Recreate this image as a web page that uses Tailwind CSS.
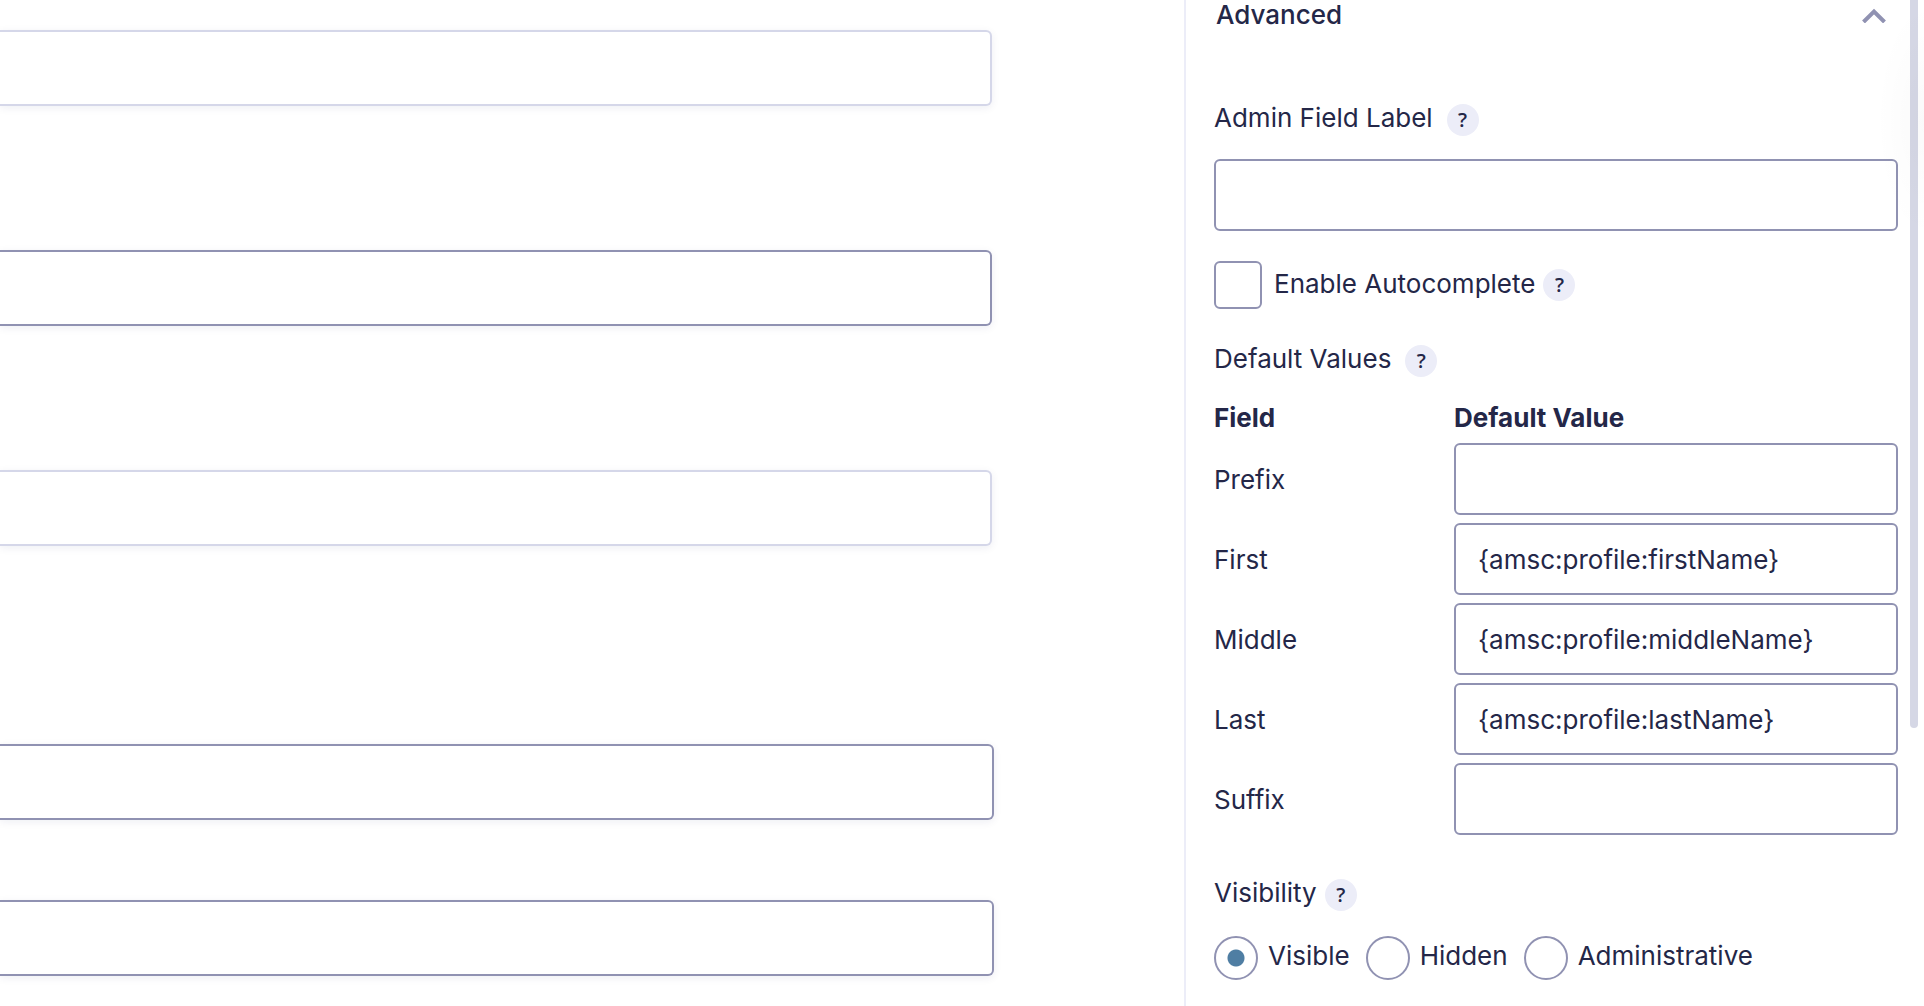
<!DOCTYPE html>
<html lang="en">
<head>
    <meta charset="UTF-8">
    <meta name="viewport" content="width=device-width, initial-scale=1.0">
    <title>Form Editor</title>
    <script src="https://cdn.jsdelivr.net/npm/@tailwindcss/browser@4"></script>
</head>
<body class="flex min-h-screen overflow-hidden bg-white font-['Inter',sans-serif] text-[26px] leading-8 text-[#242748]">
    <!-- Form canvas -->
    <main class="flex flex-1 flex-col pt-[30px] pr-[190px]">
        <div class="flex flex-col gap-36 pr-0.5">
            <input type="text" aria-label="Field 1" class="h-[76px] w-full rounded-r-md border-2 border-l-0 border-[#d5d7e9] bg-white px-6 shadow-[0_2px_8px_rgba(18,25,97,0.07)]">
            <input type="text" aria-label="Field 2" class="h-[76px] w-full rounded-r-md border-2 border-l-0 border-[#9092b2] bg-white px-6 shadow-[0_2px_8px_rgba(18,25,97,0.07)]">
            <input type="text" aria-label="Field 3" class="h-[76px] w-full rounded-r-md border-2 border-l-0 border-[#d5d7e9] bg-white px-6 shadow-[0_2px_8px_rgba(18,25,97,0.07)]">
        </div>
        <div class="mt-[198px] flex flex-col gap-20">
            <input type="text" aria-label="Field 4" class="h-[76px] w-full rounded-r-md border-2 border-l-0 border-[#9092b2] bg-white px-6 shadow-[0_2px_8px_rgba(18,25,97,0.07)]">
            <input type="text" aria-label="Field 5" class="h-[76px] w-full rounded-r-md border-2 border-l-0 border-[#9092b2] bg-white px-6 shadow-[0_2px_8px_rgba(18,25,97,0.07)]">
        </div>
    </main>

    <!-- Field settings sidebar -->
    <aside class="relative w-[740px] shrink-0 border-l-2 border-[#ecedf8] pr-[26px] pl-7">
        <button type="button" aria-expanded="true" class="flex w-full items-center justify-between pr-3 pl-0.5 text-left leading-[30px] font-medium">
            Advanced
            <svg class="h-4 w-6" viewBox="0 0 24 16" fill="none" stroke="#9092b2" stroke-width="4" aria-hidden="true">
                <path d="M1.5 15 12 4.5 22.5 15"/>
            </svg>
        </button>

        <div class="mt-[72px] flex items-center gap-3.5">
            <label for="admin-label" class="pb-1">Admin Field Label</label>
            <button type="button" aria-label="Help: Admin Field Label" class="size-8 rounded-full bg-[#ecedf8] font-['Open_Sans',sans-serif] text-xl font-semibold">?</button>
        </div>
        <input id="admin-label" type="text" class="mt-[21px] block h-[72px] w-full rounded-md border-2 border-[#9092b2] bg-white px-[22px]">

        <div class="mt-[30px] flex items-center">
            <input id="autocomplete" type="checkbox" class="size-12 appearance-none rounded-md border-2 border-[#9092b2] bg-white checked:bg-[#4f7ea3]">
            <label for="autocomplete" class="pr-2 pb-0.5 pl-3">Enable Autocomplete</label>
            <button type="button" aria-label="Help: Enable Autocomplete" class="size-8 rounded-full bg-[#ecedf8] font-['Open_Sans',sans-serif] text-xl font-semibold">?</button>
        </div>

        <div class="mt-[34px] flex items-center gap-3.5">
            <span id="defaults-title" class="pb-1">Default Values</span>
            <button type="button" aria-label="Help: Default Values" class="size-8 rounded-full bg-[#ecedf8] font-['Open_Sans',sans-serif] text-xl font-semibold">?</button>
        </div>
        <table aria-labelledby="defaults-title" class="mt-[22px] w-full table-fixed">
            <thead>
                <tr class="h-[42px] text-left align-top">
                    <th class="w-60 pt-px font-bold">Field</th>
                    <th class="pt-px font-bold">Default Value</th>
                </tr>
            </thead>
            <tbody>
                <tr>
                    <td class="pb-1.5"><label for="prefix">Prefix</label></td>
                    <td class="pb-2"><input id="prefix" type="text" class="block h-[72px] w-full rounded-md border-2 border-[#9092b2] bg-white px-[22px]"></td>
                </tr>
                <tr>
                    <td class="pb-1.5"><label for="first">First</label></td>
                    <td class="pb-2"><input id="first" type="text" value="{amsc:profile:firstName}" class="block h-[72px] w-full rounded-md border-2 border-[#9092b2] bg-white px-[22px]"></td>
                </tr>
                <tr>
                    <td class="pb-1.5"><label for="middle">Middle</label></td>
                    <td class="pb-2"><input id="middle" type="text" value="{amsc:profile:middleName}" class="block h-[72px] w-full rounded-md border-2 border-[#9092b2] bg-white px-[22px]"></td>
                </tr>
                <tr>
                    <td class="pb-1.5"><label for="last">Last</label></td>
                    <td class="pb-2"><input id="last" type="text" value="{amsc:profile:lastName}" class="block h-[72px] w-full rounded-md border-2 border-[#9092b2] bg-white px-[22px]"></td>
                </tr>
                <tr>
                    <td class="pb-1.5"><label for="suffix">Suffix</label></td>
                    <td class="pb-2"><input id="suffix" type="text" class="block h-[72px] w-full rounded-md border-2 border-[#9092b2] bg-white px-[22px]"></td>
                </tr>
            </tbody>
        </table>

        <div class="mt-[34px] flex items-center gap-2">
            <span id="visibility-title" class="pb-1">Visibility</span>
            <button type="button" aria-label="Help: Visibility" class="size-8 rounded-full bg-[#ecedf8] font-['Open_Sans',sans-serif] text-xl font-semibold">?</button>
        </div>
        <div role="radiogroup" aria-labelledby="visibility-title" class="mt-[23px] flex items-center gap-4">
            <div class="flex items-center gap-2.5">
                <input id="visible" type="radio" name="visibility" checked class="size-11 appearance-none rounded-full border-2 border-[#9092b2] bg-white checked:bg-[radial-gradient(circle,#4f7ea3_8px,white_9px)]">
                <label for="visible" class="pb-1">Visible</label>
            </div>
            <div class="flex items-center gap-2.5">
                <input id="hidden" type="radio" name="visibility" class="size-11 appearance-none rounded-full border-2 border-[#9092b2] bg-white checked:bg-[radial-gradient(circle,#4f7ea3_8px,white_9px)]">
                <label for="hidden" class="pb-1">Hidden</label>
            </div>
            <div class="flex items-center gap-2.5">
                <input id="administrative" type="radio" name="visibility" class="size-11 appearance-none rounded-full border-2 border-[#9092b2] bg-white checked:bg-[radial-gradient(circle,#4f7ea3_8px,white_9px)]">
                <label for="administrative" class="pb-1">Administrative</label>
            </div>
        </div>

        <!-- Scrollbar thumb over the panel edge -->
        <div class="absolute top-0 right-1.5 h-[728px] w-2 rounded-b-full bg-[#d5d7e5]"></div>
        <div class="pointer-events-none absolute top-0 right-0 h-60 w-12 bg-[radial-gradient(ellipse_at_right,rgba(0,0,0,0.02),transparent_70%)]"></div>
    </aside>
</body>
</html>
